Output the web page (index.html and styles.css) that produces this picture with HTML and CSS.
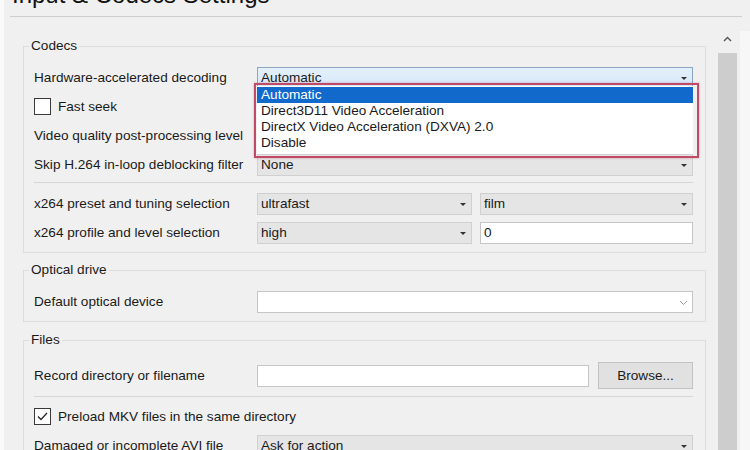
FILE: index.html
```html
<!DOCTYPE html>
<html>
<head>
  <title>Input &amp; Codecs Settings</title>
  <link rel="stylesheet" href="styles.css">
</head>
<body>
  <div class="window">
    <h1 class="title">Input &amp; Codecs Settings</h1>
    <div class="title-rule"></div>

    <div class="content">
      <div class="panel">
        <fieldset class="group">
          <legend>Codecs</legend>
          <div class="row">
            <span>Hardware-accelerated decoding</span>
            <div class="combo focus">Automatic</div>
          </div>
          <div class="row">
            <label class="check"><span class="box"></span>Fast seek</label>
          </div>
          <div class="row">
            <span>Video quality post-processing level</span>
          </div>
          <div class="row">
            <span>Skip H.264 in-loop deblocking filter</span>
            <div class="combo">None</div>
          </div>
          <div class="separator"></div>
          <div class="row">
            <span>x264 preset and tuning selection</span>
            <div class="pair">
              <div class="combo">ultrafast</div>
              <div class="combo">film</div>
            </div>
          </div>
          <div class="row">
            <span>x264 profile and level selection</span>
            <div class="pair">
              <div class="combo">high</div>
              <div class="field">0</div>
            </div>
          </div>
        </fieldset>

        <fieldset class="group">
          <legend>Optical drive</legend>
          <div class="row">
            <span>Default optical device</span>
            <div class="field editable">
              <svg class="chevron" width="9" height="6" viewBox="0 0 9 6"><path d="M1 1 L4.5 4.5 L8 1" fill="none" stroke="#9a9a9a" stroke-width="1"/></svg>
            </div>
          </div>
        </fieldset>

        <fieldset class="group">
          <legend>Files</legend>
          <div class="row files-row">
            <span>Record directory or filename</span>
            <div class="browse-pair">
              <div class="field"></div>
              <button class="button">Browse...</button>
            </div>
          </div>
          <div class="separator files-sep"></div>
          <div class="row">
            <label class="check">
              <span class="box"><svg width="15" height="15" viewBox="0 0 15 15"><path d="M3 7.5 L6 10.5 L12 4" fill="none" stroke="#2a2a2a" stroke-width="1.3"/></svg></span>
              Preload MKV files in the same directory
            </label>
          </div>
          <div class="row">
            <span>Damaged or incomplete AVI file</span>
            <div class="combo">Ask for action</div>
          </div>
        </fieldset>
      </div>

      <div class="scrollbar">
        <svg class="scroll-arrow" width="9" height="6" viewBox="0 0 9 6"><path d="M1 5 L4.5 1.5 L8 5" fill="none" stroke="#555" stroke-width="1.4"/></svg>
        <div class="scroll-thumb"></div>
      </div>
      <div class="edge"></div>
    </div>

    <!-- open dropdown of the hardware decoding combo, with the red highlight -->
    <div class="popup">
      <div class="popup-list">
        <div class="item selected">Automatic</div>
        <div class="item">Direct3D11 Video Acceleration</div>
        <div class="item">DirectX Video Acceleration (DXVA) 2.0</div>
        <div class="item">Disable</div>
      </div>
    </div>
  </div>
</body>
</html>
```

FILE: styles.css
```css
* {
  margin: 0;
  padding: 0;
  box-sizing: border-box;
}

html, body {
  width: 100%;
  height: 100%;
  overflow: hidden;
}

body {
  font-family: "Liberation Sans", Arial, sans-serif;
  font-size: 13.6px;
  color: #1a1a1a;
  background-color: #f0f0f0;
}

.window {
  position: relative;
  height: 450px;
  border-left: 4px solid #fafafa;
  overflow: hidden;
}

.title {
  font-size: 24px;
  font-weight: normal;
  line-height: 28px;
  margin: -19px 0 0 8px;
  color: #111111;
}

.title-rule {
  height: 1px;
  background: #cdcdcd;
  margin: 7px 8px 0 6px;
}

.content {
  display: flex;
  margin-top: 14px;
}

.panel {
  width: 683px;
  margin-left: 19px;
  padding-top: 7px;
}

/* Group boxes */
.group {
  border: 1px solid #dddddd;
  padding: 9px 12px 5px 10px;
}

.group + .group {
  margin-top: 9px;
}

.group:last-child {
  margin-top: 10px;
}

legend {
  line-height: 16px;
  padding: 0 2px;
  margin-left: -5px;
}

.row {
  display: grid;
  grid-template-columns: 223px 1fr;
  align-items: center;
  height: 29px;
  white-space: nowrap;
}

.files-row {
  margin-top: 4px;
}

.separator {
  height: 1px;
  background: #d6d6d6;
  margin: 3px 0 6px 0;
}

.files-sep {
  margin: 6px 0 5px 0;
}

.pair {
  display: grid;
  grid-template-columns: 215px 1fr;
  gap: 8px;
}

.browse-pair {
  display: grid;
  grid-template-columns: 1fr 95px;
  gap: 9px;
  align-items: center;
}

/* Controls */
.combo {
  position: relative;
  height: 22px;
  line-height: 20px;
  padding-left: 3px;
  border: 1px solid #d0d0d0;
  background: #e5e5e5;
}

.combo::after {
  content: "";
  position: absolute;
  right: 5px;
  top: 9px;
  border-left: 3px solid transparent;
  border-right: 3px solid transparent;
  border-top: 3px solid #333;
}

.combo.focus {
  background: linear-gradient(180deg, #e4f0fb 0%, #d6e8f8 100%);
  border-color: #8aa6c2;
}

.field {
  position: relative;
  height: 22px;
  line-height: 20px;
  padding-left: 3px;
  border: 1px solid #c6c6c6;
  background: #ffffff;
}

.editable .chevron {
  position: absolute;
  right: 4px;
  top: 8px;
}

.button {
  height: 27px;
  font-family: inherit;
  font-size: 13.6px;
  color: #1a1a1a;
  background: #e1e1e1;
  border: 1px solid #c2c2c2;
}

.check {
  display: flex;
  align-items: center;
  gap: 7px;
}

.box {
  width: 17px;
  height: 17px;
  border: 1px solid #3a3a3a;
  background: #ffffff;
  display: flex;
  align-items: center;
  justify-content: center;
}

/* Scrollbar */
.scrollbar {
  width: 21px;
  margin-left: 11px;
  display: flex;
  flex-direction: column;
  align-items: center;
}

.scroll-arrow {
  margin-top: 5px;
}

.scroll-thumb {
  width: 19px;
  height: 420px;
  margin-top: 11px;
  background: #cdcdcd;
}

.edge {
  flex: 1;
  margin-left: 2px;
  height: 420px;
  background: #f7f7f7;
}

/* Dropdown list */
.popup {
  position: absolute;
  left: 250px;
  top: 83px;
  width: 445px;
  height: 75px;
  border: 2px solid #c04b66;
  box-shadow: 0 0 2px rgba(192, 75, 102, 0.5);
}

.popup-list {
  margin: 1px 4px 0 1px;
  padding: 1px 0 3px 0;
  background: #ffffff;
}

.item {
  height: 16px;
  line-height: 16px;
  padding-left: 4px;
  white-space: nowrap;
}

.item.selected {
  background: #1169cc;
  color: #ffffff;
}
```
